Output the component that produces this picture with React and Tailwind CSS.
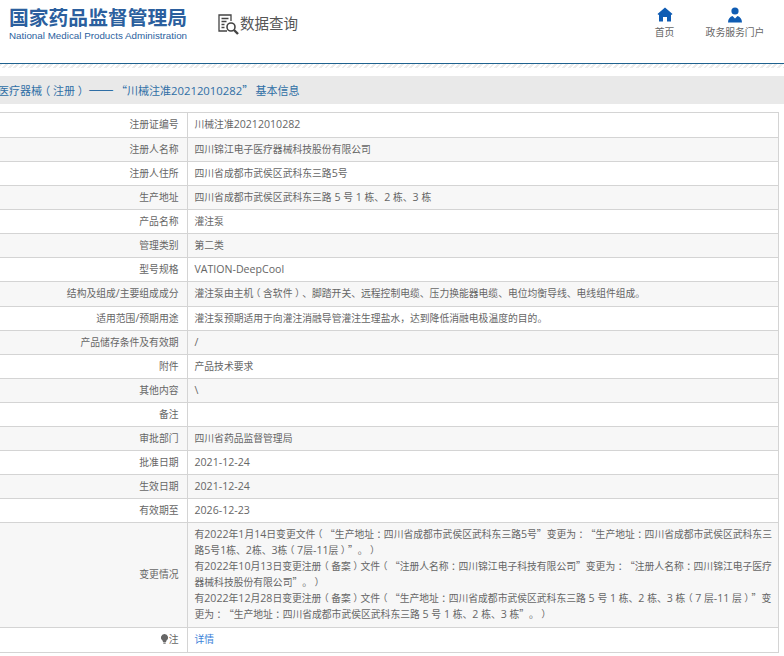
const rows = [
  ["注册证编号", "川械注准20212010282"],
  ["注册人名称", "四川锦江电子医疗器械科技股份有限公司"],
  ["注册人住所", "四川省成都市武侯区武科东三路5号"],
  ["生产地址", "四川省成都市武侯区武科东三路 5 号 1 栋、2 栋、3 栋"],
  ["产品名称", "灌注泵"],
  ["管理类别", "第二类"],
  ["型号规格", "VATION-DeepCool"],
  ["结构及组成/主要组成成分", "灌注泵由主机（含软件）、脚踏开关、远程控制电缆、压力换能器电缆、电位均衡导线、电线组件组成。"],
  ["适用范围/预期用途", "灌注泵预期适用于向灌注消融导管灌注生理盐水，达到降低消融电极温度的目的。"],
  ["产品储存条件及有效期", "/"],
  ["附件", "产品技术要求"],
  ["其他内容", "\\"],
  ["备注", ""],
  ["审批部门", "四川省药品监督管理局"],
  ["批准日期", "2021-12-24"],
  ["生效日期", "2021-12-24"],
  ["有效期至", "2026-12-23"],
]

const changes = [
  "有2022年1月14日变更文件（“生产地址：四川省成都市武侯区武科东三路5号”变更为：“生产地址：四川省成都市武侯区武科东三",
  "路5号1栋、2栋、3栋（7层-11层）”。）",
  "有2022年10月13日变更注册（备案）文件（“注册人名称：四川锦江电子科技有限公司”变更为：“注册人名称：四川锦江电子医疗",
  "器械科技股份有限公司”。）",
  "有2022年12月28日变更注册（备案）文件（“生产地址：四川省成都市武侯区武科东三路 5 号 1 栋、2 栋、3 栋（7 层-11 层）”变",
  "更为：“生产地址：四川省成都市武侯区武科东三路 5 号 1 栋、2 栋、3 栋”。）",
]

// 全角标点居中：取半宽字形，两边各留 1/4 字宽
function Punct({ children }) {
  return <span className="mx-[0.25em] [font-feature-settings:'halt']">{children}</span>
}

// 西文用 Open Sans
function Txt({ children }) {
  const parts = children.split(/([A-Za-z0-9\-/\\ ]+|[（）：])/).filter(Boolean)
  return parts.map((p, i) => {
    if ("（）：".includes(p)) return <Punct key={i}>{p}</Punct>
    if (/^[A-Za-z0-9\-/\\ ]+$/.test(p)) {
      return <span key={i} className="font-['Open_Sans',sans-serif] text-[10.6px]">{p}</span>
    }
    return p
  })
}

function Row({ label, striped, children, tall, extra }) {
  return (
    <tr className={striped ? "bg-[#f7f7f7]" : "bg-white"}>
      <td className="w-[197px] border border-[#d4d4d4] border-l-0 pr-[8px] pb-[2px] text-right align-middle leading-[16px]">{label}</td>
      <td className={`border border-[#d4d4d4] pl-[7px] pr-[4px] align-middle leading-[16px] ${tall ? "pt-[3px] pb-[5px]" : extra ? "h-[25px] pb-[2px]" : "h-[24px] pb-[2px]"}`}>
        {children}
      </td>
    </tr>
  )
}

export default function App() {
  return (
    <div className="w-[784px] h-[656px] overflow-hidden bg-white font-['Noto_Sans_CJK_SC','Noto_Sans',sans-serif] text-[9.8px] text-[#666] [text-spacing-trim:space-all]">

      {/* 顶部 */}
      <header className="h-[63px] flex">
        <div className="w-[217px] pl-[9px] pt-[4px]">
          <div className="text-[19.8px] leading-[25px] font-bold text-[#2b5f9e] whitespace-nowrap">国家药品监督管理局</div>
          <div className="mt-[1px] font-['Liberation_Sans',sans-serif] text-[9.8px] leading-[12px] text-[#2b5f9e] whitespace-nowrap">National Medical Products Administration</div>
        </div>
        <div className="flex items-start pt-[13px] gap-[1px] w-[405px]">
          <svg width="23" height="23" viewBox="0 0 23 23" fill="none" stroke="#444" strokeWidth="1.3">
            <path d="M10 18H2V2h12v6" />
            <path d="M4.500 5.500h7M4.500 8.500h5M4.500 11.500h3M4.500 14.500h3" />
            <circle cx="14" cy="14" r="4" strokeWidth="1.600" />
            <path d="M17 17l4 4" strokeWidth="2.400" />
          </svg>
          <span className="ml-[-1px] text-[14.5px] leading-[20px] text-[#555] whitespace-nowrap">数据查询</span>
        </div>
        <div className="flex-1 flex pt-[7px]">
          <div className="w-[82px] flex flex-col items-center pl-[3px]">
            <svg width="16" height="15" viewBox="0 0 16 15" fill="#0f5cb3">
              <path d="M8 0.500L15.500 7l-1 1-.5-.4V14.500H10V10H6v4.500H2V7.600l-.5.4-1-1z" />
            </svg>
            <span className="mt-[3px] leading-[14px] whitespace-nowrap">首页</span>
          </div>
          <div className="w-[62px] flex flex-col items-center">
            <svg width="16" height="16" viewBox="0 0 16 16" fill="#0f5cb3">
              <circle cx="8" cy="4" r="3.600" />
              <path d="M1 15.500c0-3.500 2-6 4.500-6.500L8 11.500 10.500 9c2.500.5 4.500 3 4.500 6.500z" />
            </svg>
            <span className="mt-[2px] leading-[14px] whitespace-nowrap">政务服务门户</span>
          </div>
        </div>
      </header>

      {/* 分隔线 */}
      <div className="border-t border-[#1f628f]" />
      <div className="h-[4px] bg-[repeating-linear-gradient(135deg,#ececec_0,#ececec_2px,#fff_2px,#fff_4px)]" />

      {/* 标题 */}
      <div className="mt-[8px] h-[28px] bg-[#e9e9e9] flex items-center">
        <span className="ml-[-2px] text-[11px] leading-[16px] text-[#2f6ea5] whitespace-nowrap">
          医疗器械<Punct>（</Punct>注册<Punct>）</Punct> <span className="text-[15px] leading-[16px]">——</span> “川械注准<span className="font-['Open_Sans',sans-serif] text-[11.3px]">20212010282</span>” 基本信息
        </span>
      </div>

      {/* 详情表格 */}
      <table className="mt-[8px] ml-[-10px] w-[789px] table-fixed border-collapse">
        <tbody>
          {rows.map((r, i) => (
            <Row key={r[0]} label={<Txt>{r[0]}</Txt>} striped={i % 2 === 1} extra={i === 0 || i === 7}>
              <Txt>{r[1]}</Txt>
            </Row>
          ))}
          <Row label="变更情况" striped tall>
            {changes.map((c) => (
              <div key={c} className="whitespace-nowrap"><Txt>{c}</Txt></div>
            ))}
          </Row>
          <Row
            extra
            label={
              <span className="inline-flex items-center gap-[1px]">
                <svg width="7" height="10" viewBox="0 0 7 10" fill="#666">
                  <path d="M3.500 0a3.500 3.500 0 0 1 2 6.400L5 8H2l-.5-1.600A3.500 3.500 0 0 1 3.500 0z" />
                  <rect x="2.300" y="8.500" width="2.400" height="1.200" />
                </svg>
                注
              </span>
            }
          >
            <span className="text-[#3b82d9]">详情</span>
          </Row>
        </tbody>
      </table>
    </div>
  )
}
